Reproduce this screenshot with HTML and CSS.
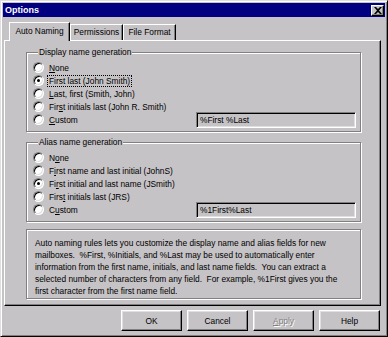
FILE: index.html
```html
<!DOCTYPE html>
<html lang="en">
<head>
  <meta charset="UTF-8">
  <title>Options</title>
  <link rel="stylesheet" href="styles.css">
</head>
<body>
  <div class="window">
    <div class="titlebar">
      <span class="title">Options</span>
      <button class="close" aria-label="Close">
        <svg width="8" height="7" viewBox="0 0 8 7"><path d="M0 0h2l2 2 2-2h2L5 3.5 8 7H6L4 5 2 7H0l3-3.5z" fill="#000"/></svg>
      </button>
    </div>

    <div class="tabs">
      <div class="tab active">Auto Naming</div>
      <div class="tab">Permissions</div>
      <div class="tab">File Format</div>
    </div>

    <div class="panel">
      <fieldset class="group">
        <legend>Display name generation</legend>
        <div class="option"><span class="radio"></span><span><u>N</u>one</span></div>
        <div class="option"><span class="radio checked"></span><span class="focus">First last (John Smith)</span></div>
        <div class="option"><span class="radio"></span><span><u>L</u>ast, first (Smith, John)</span></div>
        <div class="option"><span class="radio"></span><span>Fir<u>s</u>t initials last (John R. Smith)</span></div>
        <div class="option"><span class="radio"></span><span><u>C</u>ustom</span><div class="field">%First %Last</div></div>
      </fieldset>

      <fieldset class="group">
        <legend>Alias name generation</legend>
        <div class="option"><span class="radio"></span><span>N<u>o</u>ne</span></div>
        <div class="option"><span class="radio"></span><span>F<u>i</u>rst name and last initial (JohnS)</span></div>
        <div class="option"><span class="radio checked"></span><span>Fi<u>r</u>st initial and last name (JSmith)</span></div>
        <div class="option"><span class="radio"></span><span>Firs<u>t</u> initials last (JRS)</span></div>
        <div class="option"><span class="radio"></span><span>C<u>u</u>stom</span><div class="field">%1First%Last</div></div>
      </fieldset>

      <p class="info">
        Auto naming rules lets you customize the display name and alias fields for new<br>
        mailboxes.&nbsp; %First, %Initials, and %Last may be used to automatically enter<br>
        information from the first name, initials, and last name fields.&nbsp; You can extract a<br>
        selected number of characters from any field.&nbsp; For example, %1First gives you the<br>
        first character from the first name field.
      </p>
    </div>

    <div class="buttons">
      <button class="btn">OK</button>
      <button class="btn">Cancel</button>
      <button class="btn" disabled><u>A</u>pply</button>
      <button class="btn">Help</button>
    </div>
  </div>
</body>
</html>
```

FILE: styles.css
```css
* { margin: 0; padding: 0; box-sizing: border-box; }
body {
  background: #c6c3c6;
  font-family: "Liberation Sans", Arial, sans-serif;
  font-size: 8.35px;
  color: #000;
}
.window {
  width: 388px;
  height: 337px;
  padding: 2px;
  border: 1px solid;
  border-color: #dfdfdf #000 #000 #dfdfdf;
  box-shadow: inset 1px 1px #fff, inset -1px -1px #808080;
}
.titlebar {
  height: 14px;
  background: #000080;
  display: flex;
  align-items: center;
  justify-content: space-between;
  padding: 0 1px 0 2px;
}
.title {
  color: #fff;
  font-weight: bold;
  font-size: 9px;
}
.close {
  width: 13px;
  height: 11px;
  background: #c6c3c6;
  border: 1px solid;
  border-color: #fff #000 #000 #fff;
  box-shadow: inset -1px -1px #808080;
  display: flex;
  align-items: center;
  justify-content: center;
}
.tabs {
  display: flex;
  align-items: flex-end;
  height: 18px;
  margin: 5px 0 0 6px;
}
.tab {
  height: 16px;
  width: 53px;
  text-align: center;
  line-height: 14px;
  border-top: 1px solid #fff;
  border-left: 1px solid #fff;
  border-right: 1px solid #000;
  box-shadow: inset -1px 0 #808080;
  white-space: nowrap;
}
.tab.active {
  width: 61px;
  height: 19px;
  margin-bottom: -1px;
  line-height: 17px;
  background: #c6c3c6;
  position: relative;
  z-index: 1;
}
.panel {
  margin-left: 1px;
  width: 377px;
  height: 266px;
  border: 1px solid;
  border-color: #fff #000 #000 #fff;
  box-shadow: inset -1px -1px #808080;
  padding: 6px 0 0 21px;
}
.group {
  width: 335px;
  border: 1px solid #808080;
  box-shadow: 1px 1px #fff, inset 1px 1px #fff;
  padding: 3px 4px 5px 6px;
  margin-bottom: 5px;
}
.group legend {
  margin-left: 5px;
  padding: 0 1px;
  line-height: 11px;
  background: #c6c3c6;
}
.option {
  display: flex;
  align-items: center;
  height: 13px;
  white-space: nowrap;
}
.radio {
  width: 11px;
  height: 11px;
  margin-right: 5px;
  border-radius: 50%;
  border: 1px solid;
  border-color: #808080 #fff #fff #808080;
  background: #fff;
  box-shadow: inset 1px 1px #000, inset -1px -1px #dfdfdf;
  display: flex;
  align-items: center;
  justify-content: center;
  flex-shrink: 0;
}
.radio.checked::after {
  content: "";
  width: 3px;
  height: 3px;
  border-radius: 50%;
  background: #000;
}
.focus {
  outline: 1px dotted #000;
  padding: 0 1px;
  margin-left: -1px;
}
.field {
  margin-left: auto;
  width: 160px;
  height: 16px;
  padding-left: 3px;
  line-height: 14px;
  border: 1px solid;
  border-color: #808080 #fff #fff #808080;
  box-shadow: inset 1px 1px #000, inset -1px -1px #dfdfdf;
  background: #c6c3c6;
}
.info {
  width: 335px;
  margin-top: 7px;
  border: 1px solid #808080;
  box-shadow: 1px 1px #fff, inset 1px 1px #fff;
  padding: 7px 0 1px 8px;
  line-height: 12px;
  white-space: nowrap;
}
.buttons {
  display: flex;
  justify-content: flex-end;
  gap: 5px;
  margin: 4px 5px 0 0;
}
.btn {
  width: 61px;
  height: 21px;
  font-family: inherit;
  font-size: 8.35px;
  color: #000;
  background: #c6c3c6;
  border: 1px solid;
  border-color: #fff #000 #000 #fff;
  box-shadow: inset -1px -1px #808080, inset 1px 1px #dfdfdf;
}
.btn:disabled {
  color: #808080;
  text-shadow: 1px 1px #fff;
}
```
